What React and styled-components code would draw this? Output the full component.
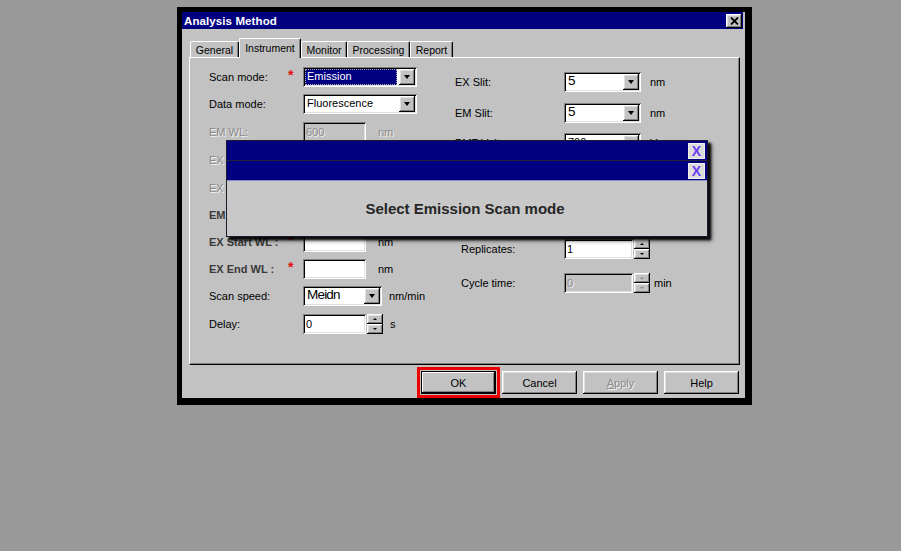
import React from 'react';
import styled, { createGlobalStyle, css } from 'styled-components';

const FACE = '#c2c2c2';
const NAVY = '#000080';

const Global = createGlobalStyle`
  html, body { margin: 0; padding: 0; background: #999999; }
  body { font-family: "Liberation Sans", Arial, sans-serif; color: #000; }
  #root { width: 901px; height: 551px; overflow: hidden; }
`;

const raised = css`
  box-shadow: inset -1px -1px #000, inset 1px 1px #fff, inset -2px -2px #808080, inset 2px 2px #e0e0e0;
`;
const sunken = css`
  box-shadow: inset 1px 1px #808080, inset -1px -1px #fff, inset 2px 2px #000, inset -2px -2px #e0e0e0;
`;

const Page = styled.div`
  position: relative;
  box-sizing: border-box;
  width: 901px;
  height: 551px;
  padding: 7px 0 0 177px;
`;

const Frame = styled.div`
  box-sizing: border-box;
  width: 575px;
  height: 398px;
  background: #000;
  padding: 5px 7px 7px 5px;
  display: flex;
`;

const Window = styled.div`
  flex: 1;
  display: flex;
  flex-direction: column;
  background: ${FACE};
`;

const TitleBar = styled.div`
  height: 17px;
  margin-right: 2px;
  background: ${NAVY};
  display: flex;
  align-items: center;
  justify-content: space-between;
  padding: 0 1px 0 2px;
`;

const TitleText = styled.span`
  color: #fff;
  font-weight: bold;
  font-size: 11.5px;
  letter-spacing: 0.1px;
`;

const CloseBtn = styled.div`
  width: 16px;
  height: 14px;
  background: ${FACE};
  ${raised};
  display: flex;
  align-items: center;
  justify-content: center;
`;

const Body = styled.div`
  flex: 1;
  display: flex;
  flex-direction: column;
  padding: 9px 5px 0 7px;
`;

const TabRow = styled.div`
  height: 19px;
  display: flex;
  align-items: flex-end;
  padding-left: 1px;
  position: relative;
  z-index: 2;
`;

const Tab = styled.div`
  box-sizing: border-box;
  width: ${(p) => p.$w}px;
  height: ${(p) => (p.$active ? 20 : 16)}px;
  margin-bottom: ${(p) => (p.$active ? '-1px' : '0')};
  padding-bottom: ${(p) => (p.$active ? 2 : 0)}px;
  background: ${FACE};
  border-top: 1px solid #fff;
  border-left: 1px solid #fff;
  border-right: 1px solid #000;
  box-shadow: inset -1px 0 #808080;
  border-radius: 2px 2px 0 0;
  font-size: 10.5px;
  display: flex;
  align-items: center;
  justify-content: center;
`;

const Panel = styled.div`
  box-sizing: border-box;
  height: 308px;
  border-top: 1px solid #fff;
  border-left: 1px solid #fff;
  border-right: 1px solid #000;
  border-bottom: 1px solid #000;
  box-shadow: inset -1px -1px #808080;
  display: flex;
`;

const Column = styled.div`
  box-sizing: border-box;
  width: ${(p) => (p.$w ? `${p.$w}px` : 'auto')};
  flex: ${(p) => (p.$w ? 'none' : '1')};
  padding: ${(p) => p.$pt}px 0 0 ${(p) => p.$pl}px;
  display: flex;
  flex-direction: column;
`;

const FormRow = styled.div`
  height: ${(p) => p.$h}px;
  display: grid;
  grid-template-columns: ${(p) => p.$cols};
  align-items: center;
`;

const Label = styled.span`
  font-size: 11px;
  white-space: nowrap;
  padding-left: ${(p) => p.$indent || 0}px;
  color: ${(p) => (p.$disabled ? '#8a8a8a' : p.$strong ? '#3a3a3a' : '#000')};
  font-weight: ${(p) => (p.$strong ? 'bold' : 'normal')};
  text-shadow: ${(p) => (p.$disabled ? '1px 1px 0 #f4f4f4' : 'none')};
`;

const Star = styled.span`
  color: #e01010;
  font-size: 14px;
  font-weight: bold;
  line-height: 1;
  margin-top: -4px;
`;

const Controls = styled.div`
  display: flex;
  align-items: center;
`;

const Select = styled.div`
  box-sizing: border-box;
  width: ${(p) => p.$w}px;
  height: 20px;
  background: #fff;
  ${sunken};
  display: flex;
  align-items: center;
  padding: 2px;
`;

const SelectText = styled.span`
  flex: 1;
  align-self: stretch;
  display: flex;
  align-items: ${(p) => (p.$big ? 'flex-start' : 'center')};
  margin-right: 2px;
  padding-left: 2px;
  font-size: ${(p) => (p.$big ? 13.5 : 11)}px;
  line-height: 1;
  background: ${(p) => (p.$hl ? NAVY : 'transparent')};
  color: ${(p) => (p.$hl ? '#fff' : '#000')};
  outline: ${(p) => (p.$hl ? '1px dotted #aab' : 'none')};
  outline-offset: -1px;
  letter-spacing: ${(p) => (p.$tight ? '-0.8px' : '0')};
  overflow: hidden;
  white-space: nowrap;
`;

const DropBtn = styled.div`
  width: 16px;
  height: 16px;
  flex: none;
  background: ${FACE};
  ${raised};
  display: flex;
  align-items: center;
  justify-content: center;
`;

const Arrow = styled.span`
  width: 0;
  height: 0;
  border-left: ${(p) => (p.$small ? 2 : 3.5)}px solid transparent;
  border-right: ${(p) => (p.$small ? 2 : 3.5)}px solid transparent;
  ${(p) =>
    p.$up
      ? `border-bottom: ${p.$small ? 2 : 4}px solid ${p.$grey ? '#8a8a8a' : '#000'};`
      : `border-top: ${p.$small ? 2 : 4}px solid ${p.$grey ? '#8a8a8a' : '#000'};`}
`;

const Field = styled.div`
  box-sizing: border-box;
  width: ${(p) => p.$w}px;
  height: 20px;
  background: ${(p) => (p.$disabled ? FACE : '#fff')};
  ${sunken};
  display: flex;
  align-items: center;
  padding: 0 3px;
  font-size: ${(p) => (p.$big ? 12.5 : 11)}px;
  color: ${(p) => (p.$disabled ? '#8a8a8a' : '#000')};
  text-shadow: ${(p) => (p.$disabled ? '1px 1px 0 #eee' : 'none')};
`;

const SpinBtns = styled.div`
  display: flex;
  flex-direction: column;
  margin-left: 1px;
`;

const SpinBtn = styled.div`
  width: 16px;
  height: 10px;
  background: ${FACE};
  ${raised};
  display: flex;
  align-items: center;
  justify-content: center;
`;

const Unit = styled.span`
  font-size: 11px;
  margin-left: ${(p) => p.$ml}px;
  color: ${(p) => (p.$disabled ? '#8a8a8a' : '#000')};
  text-shadow: ${(p) => (p.$disabled ? '1px 1px 0 #f4f4f4' : 'none')};
  white-space: nowrap;
`;

const ButtonRow = styled.div`
  display: flex;
  justify-content: flex-end;
  gap: 6px;
  margin-top: 6px;
  padding-right: 1px;
`;

const Button = styled.div`
  box-sizing: border-box;
  width: 75px;
  height: 23px;
  background: ${FACE};
  ${(p) =>
    p.$default
      ? css`
          box-shadow: inset 0 0 0 1px #000, inset -2px -2px #000, inset 2px 2px #fff, inset -3px -3px #808080;
          outline: 3px solid #ee0000;
          outline-offset: 1px;
        `
      : raised};
  display: flex;
  align-items: center;
  justify-content: center;
  font-size: 11px;
  color: ${(p) => (p.$disabled ? '#8a8a8a' : '#000')};
  text-shadow: ${(p) => (p.$disabled ? '1px 1px 0 #f4f4f4' : 'none')};
  u { text-decoration: underline; }
`;

const Popup = styled.div`
  position: absolute;
  left: 226px;
  top: 140px;
  box-sizing: border-box;
  width: 482px;
  height: 97px;
  background: #c8c8c8;
  border: 1px solid #1c1c2c;
  box-shadow: 3px 3px 2px rgba(0, 0, 0, 0.9), 4px 4px 4px rgba(0, 0, 0, 0.5);
  display: flex;
  flex-direction: column;
  z-index: 10;
`;

const PopupBar = styled.div`
  height: 19px;
  background: ${NAVY};
  display: flex;
  align-items: center;
  justify-content: flex-end;
  padding-right: 2px;
  border-bottom: 1px solid ${(p) => (p.$last ? '#8c8cc8' : '#25253a')};
`;

const PopupClose = styled.div`
  box-sizing: border-box;
  width: 17px;
  height: 16px;
  background: #dcdcdc;
  border: 1px solid #f0f0f0;
  display: flex;
  align-items: center;
  justify-content: center;
  color: #6b3cf5;
  font-weight: bold;
  font-size: 14px;
  line-height: 1;
`;

const PopupBody = styled.div`
  flex: 1;
  display: flex;
  align-items: center;
  justify-content: center;
`;

const PopupMsg = styled.span`
  font-size: 15px;
  font-weight: bold;
  color: #262626;
  margin-left: -4px;
`;

const LEFT_COLS = '79px 15px auto';
const RIGHT_COLS = '109px auto';

const Drop = ({ w, text, hl, big, tight }) => (
  <Select $w={w}>
    <SelectText $hl={hl} $big={big} $tight={tight}>{text}</SelectText>
    <DropBtn>
      <Arrow />
    </DropBtn>
  </Select>
);

const Spinner = ({ w, value, disabled }) => (
  <Controls>
    <Field $w={w} $disabled={disabled}>{value}</Field>
    <SpinBtns>
      <SpinBtn>
        <Arrow $up $small $grey={disabled} />
      </SpinBtn>
      <SpinBtn>
        <Arrow $small $grey={disabled} />
      </SpinBtn>
    </SpinBtns>
  </Controls>
);

export default function App() {
  const tabs = [
    { name: 'General', w: 49 },
    { name: 'Instrument', w: 62, active: true },
    { name: 'Monitor', w: 46 },
    { name: 'Processing', w: 63 },
    { name: 'Report', w: 43 },
  ];

  return (
    <>
      <Global />
      <Page>
        <Frame>
          <Window>
            <TitleBar>
              <TitleText>Analysis Method</TitleText>
              <CloseBtn>
                <svg width="9" height="8" viewBox="0 0 9 8">
                  <path d="M1 0.5 L8 7.5 M8 0.5 L1 7.5" stroke="#000" strokeWidth="1.8" />
                </svg>
              </CloseBtn>
            </TitleBar>
            <Body>
              <TabRow>
                {tabs.map((t) => (
                  <Tab key={t.name} $w={t.w} $active={t.active}>
                    {t.name}
                  </Tab>
                ))}
              </TabRow>
              <Panel>
                <Column $w={265} $pt={5} $pl={19}>
                  <FormRow $h={27} $cols={LEFT_COLS}>
                    <Label>Scan mode:</Label>
                    <Star>*</Star>
                    <Drop w={114} text="Emission" hl />
                  </FormRow>
                  <FormRow $h={27} $cols={LEFT_COLS}>
                    <Label>Data mode:</Label>
                    <span />
                    <Drop w={114} text="Fluorescence" />
                  </FormRow>
                  <FormRow $h={29} $cols={LEFT_COLS}>
                    <Label $disabled>EM WL:</Label>
                    <span />
                    <Controls>
                      <Field $w={63} $disabled>600</Field>
                      <Unit $ml={12} $disabled>nm</Unit>
                    </Controls>
                  </FormRow>
                  <FormRow $h={28} $cols={LEFT_COLS}>
                    <Label $disabled>EX WL:</Label>
                    <span />
                    <Controls>
                      <Field $w={63} $disabled />
                    </Controls>
                  </FormRow>
                  <FormRow $h={27} $cols={LEFT_COLS}>
                    <Label $disabled>EX Step:</Label>
                    <span />
                    <Controls>
                      <Field $w={63} $disabled />
                    </Controls>
                  </FormRow>
                  <FormRow $h={27} $cols={LEFT_COLS}>
                    <Label $strong>EM WL :</Label>
                    <Star>*</Star>
                    <Controls>
                      <Field $w={63} />
                    </Controls>
                  </FormRow>
                  <FormRow $h={27} $cols={LEFT_COLS}>
                    <Label $strong>EX Start WL :</Label>
                    <Star>*</Star>
                    <Controls>
                      <Field $w={63} />
                      <Unit $ml={12}>nm</Unit>
                    </Controls>
                  </FormRow>
                  <FormRow $h={27} $cols={LEFT_COLS}>
                    <Label $strong>EX End WL :</Label>
                    <Star>*</Star>
                    <Controls>
                      <Field $w={63} />
                      <Unit $ml={12}>nm</Unit>
                    </Controls>
                  </FormRow>
                  <FormRow $h={28} $cols={LEFT_COLS}>
                    <Label>Scan speed:</Label>
                    <span />
                    <Controls>
                      <Drop w={79} text="Meidn" big tight />
                      <Unit $ml={7}>nm/min</Unit>
                    </Controls>
                  </FormRow>
                  <FormRow $h={28} $cols={LEFT_COLS}>
                    <Label>Delay:</Label>
                    <span />
                    <Controls>
                      <Spinner w={63} value="0" />
                      <Unit $ml={7}>s</Unit>
                    </Controls>
                  </FormRow>
                </Column>
                <Column $pt={9} $pl={0}>
                  <FormRow $h={30} $cols={RIGHT_COLS}>
                    <Label>EX Slit:</Label>
                    <Controls>
                      <Drop w={77} text="5" big />
                      <Unit $ml={9}>nm</Unit>
                    </Controls>
                  </FormRow>
                  <FormRow $h={32} $cols={RIGHT_COLS}>
                    <Label>EM Slit:</Label>
                    <Controls>
                      <Drop w={77} text="5" big />
                      <Unit $ml={9}>nm</Unit>
                    </Controls>
                  </FormRow>
                  <FormRow $h={27} $cols={RIGHT_COLS}>
                    <Label>PMT Voltage:</Label>
                    <Controls>
                      <Drop w={77} text="700" />
                      <Unit $ml={9}>V</Unit>
                    </Controls>
                  </FormRow>
                  <FormRow $h={81} $cols={RIGHT_COLS}>
                    <span />
                    <span />
                  </FormRow>
                  <FormRow $h={24} $cols={RIGHT_COLS}>
                    <Label $indent={6}>Replicates:</Label>
                    <Spinner w={69} value="1" />
                  </FormRow>
                  <FormRow $h={44} $cols={RIGHT_COLS}>
                    <Label $indent={6}>Cycle time:</Label>
                    <Controls>
                      <Spinner w={69} value="0" disabled />
                      <Unit $ml={4}>min</Unit>
                    </Controls>
                  </FormRow>
                </Column>
              </Panel>
              <ButtonRow>
                <Button $default>OK</Button>
                <Button>Cancel</Button>
                <Button $disabled>
                  <span>
                    <u>A</u>pply
                  </span>
                </Button>
                <Button>Help</Button>
              </ButtonRow>
            </Body>
          </Window>
        </Frame>
        <Popup>
          <PopupBar>
            <PopupClose>X</PopupClose>
          </PopupBar>
          <PopupBar $last>
            <PopupClose>X</PopupClose>
          </PopupBar>
          <PopupBody>
            <PopupMsg>Select Emission Scan mode</PopupMsg>
          </PopupBody>
        </Popup>
      </Page>
    </>
  );
}
